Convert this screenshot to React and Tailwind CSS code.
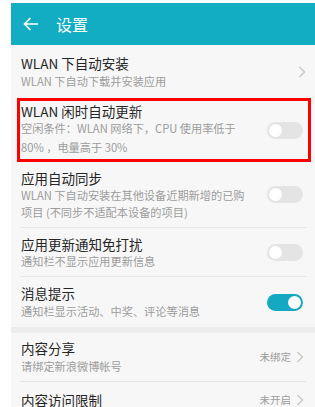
import React from "react";

const font = { fontFamily: '"Noto Sans CJK SC", "Noto Sans", sans-serif' };

const titleCls = "text-[13.5px] leading-[18px] text-[#262626]";
const subCls = "text-[11.2px] text-[#9c9c9c]";

function Toggle({ on }) {
  return (
    <div
      className={`w-[36px] h-[17px] rounded-full flex items-center px-[2px] shrink-0 ${
        on ? "bg-[#14a9c1] justify-end" : "bg-[#e4e4e4] justify-start"
      }`}
    >
      <div className="w-[13px] h-[13px] rounded-full bg-white" />
    </div>
  );
}

function Chevron() {
  return (
    <svg width="8" height="12" viewBox="0 0 8 12" className="shrink-0">
      <path d="M1.5 1 L6.5 6 L1.5 11" fill="none" stroke="#c4c4c4" strokeWidth="1.2" />
    </svg>
  );
}

export default function App() {
  return (
    <div className="w-[315px] h-[407px] overflow-hidden bg-white pl-[11px] pt-[3px]" style={font}>
      <div className="bg-[#f7f7f7] h-full">
        {/* Header */}
        <div className="h-[42px] bg-[#13adc3] flex items-center pl-[12px]">
          <svg width="16" height="14" viewBox="0 0 16 14">
            <path d="M15 7 H1.5 M7.5 1 L1.5 7 L7.5 13" fill="none" stroke="white" strokeWidth="1.6" />
          </svg>
          <span className="ml-[17px] text-white text-[16px] leading-[20px]">设置</span>
        </div>

        {/* WLAN 下自动安装 */}
        <div className="h-[53px] flex items-center justify-between pl-[10px] pr-[9px]">
          <div className="flex flex-col">
            <span className={titleCls}>WLAN 下自动安装</span>
            <span className={`${subCls} leading-[18px]`}>WLAN 下自动下载并安装应用</span>
          </div>
          <Chevron />
        </div>

        {/* WLAN 闲时自动更新 */}
        <div className="h-[64px] ml-[6px] mr-[4px] border-[3px] border-[#ff0000] flex items-center justify-between pl-[1px] pr-[5px]">
          <div className="flex flex-col">
            <span className="text-[13.5px] leading-[16px] text-[#262626]">WLAN 闲时自动更新</span>
            <span className={`${subCls} leading-[19px] whitespace-nowrap`}>
              空闲条件：WLAN 网络下，CPU 使用率低于
              <br />
              80% ，电量高于 30%
            </span>
          </div>
          <Toggle />
        </div>

        {/* 应用自动同步 */}
        <div className="h-[66px] mx-[9px] border-b border-[#e6e6e6] flex items-center justify-between pl-[1px] pr-[3px]">
          <div className="flex flex-col">
            <span className={titleCls}>应用自动同步</span>
            <span className={`${subCls} leading-[17px] whitespace-nowrap`}>
              WLAN 下自动安装在其他设备近期新增的已购
              <br />
              项目 (不同步不适配本设备的项目)
            </span>
          </div>
          <Toggle />
        </div>

        {/* 应用更新通知免打扰 */}
        <div className="h-[49px] mx-[9px] border-b border-[#e6e6e6] flex items-center justify-between pl-[1px] pr-[3px]">
          <div className="flex flex-col">
            <span className={titleCls}>应用更新通知免打扰</span>
            <span className={`${subCls} leading-[17px]`}>通知栏不显示应用更新信息</span>
          </div>
          <Toggle />
        </div>

        {/* 消息提示 */}
        <div className="h-[50px] mx-[9px] flex items-center justify-between pl-[1px] pr-[3px]">
          <div className="flex flex-col">
            <span className={titleCls}>消息提示</span>
            <span className={`${subCls} leading-[18px]`}>通知栏显示活动、中奖、评论等消息</span>
          </div>
          <Toggle on />
        </div>

        <div className="h-[6px] bg-[#ececec]" />

        {/* 内容分享 */}
        <div className="h-[49px] mx-[9px] border-b border-[#e6e6e6] flex items-center justify-between pl-[1px] pr-[2px]">
          <div className="flex flex-col">
            <span className={titleCls}>内容分享</span>
            <span className={`${subCls} leading-[18px]`}>请绑定新浪微博帐号</span>
          </div>
          <div className="flex items-center gap-[5px]">
            <span className="text-[10.5px] text-[#9c9c9c]">未绑定</span>
            <Chevron />
          </div>
        </div>

        {/* 内容访问限制 */}
        <div className="h-[49px] mx-[9px] flex items-start justify-between pl-[1px] pr-[2px] pt-[9px]">
          <span className={titleCls}>内容访问限制</span>
          <div className="flex items-center gap-[5px] h-[18px]">
            <span className="text-[10.5px] text-[#9c9c9c]">未开启</span>
            <Chevron />
          </div>
        </div>
      </div>
    </div>
  );
}
